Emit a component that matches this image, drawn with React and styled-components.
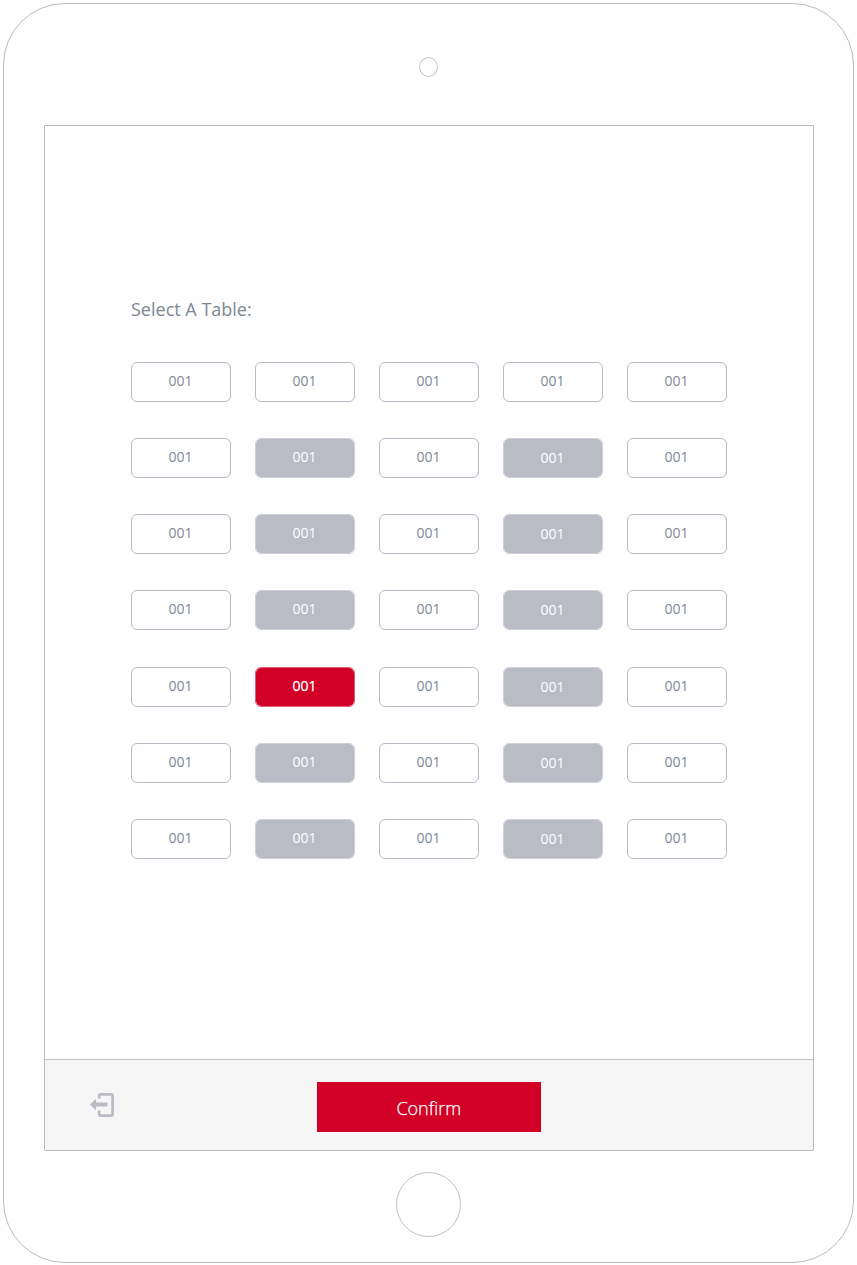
import React, { useState } from 'react';
import styled, { createGlobalStyle, css } from 'styled-components';

const GlobalStyle = createGlobalStyle`
  *, *::before, *::after { box-sizing: border-box; }
  body {
    margin: 0;
    background: #fefefe;
    font-family: "Open Sans", "Noto Sans", sans-serif;
  }
  button { font-family: inherit; }
`;

const Tablet = styled.div`
  width: 851px;
  height: 1260px;
  margin: 3px;
  padding-top: 53px;
  border: 1px solid #bcbcbc;
  border-radius: 62px;
  background: #fefefe;
  display: flex;
  flex-direction: column;
  align-items: center;
`;

const Camera = styled.div`
  flex: none;
  width: 19px;
  height: 20px;
  border: 1px solid #c8c8c8;
  border-radius: 50%;
`;

const Screen = styled.main`
  flex: none;
  width: 770px;
  height: 1026px;
  margin-top: 48px;
  border: 1px solid #bcbcbc;
  border-radius: 1px;
  display: flex;
  flex-direction: column;
`;

const HomeButton = styled.div`
  flex: none;
  width: 65px;
  height: 65px;
  margin-top: 21px;
  border: 1px solid #c2c2c2;
  border-radius: 50%;
`;

const Content = styled.section`
  flex: 1;
  padding: 171px 86px 0;
`;

const Title = styled.h1`
  margin: 0 0 40px;
  padding-left: 0.5px;
  font-size: 18px;
  line-height: 25px;
  font-weight: 400;
  color: #7d8894;
`;

const TableGrid = styled.div`
  display: grid;
  grid-template-columns: repeat(5, 100px);
  grid-auto-rows: 40px;
  column-gap: 24px;
  row-gap: 36.15px;
`;

const tones = {
  free: css`
    background: #fefefe;
    border-color: #b9bbc6;
    color: #7d8894;
  `,
  taken: css`
    background: #b9bbc5;
    border-color: #cfd0d8;
    background-clip: padding-box;
    color: #fefefe;
  `,
  selected: css`
    background: #d20026;
    border-color: #e0607a;
    background-clip: padding-box;
    color: #fff;
    -webkit-text-stroke: 0.25px #fff;
  `,
};

const TableButton = styled.button`
  padding: ${({ $lowered }) => ($lowered ? '0' : '0 0 2px')};
  border: 1px solid;
  border-radius: 6px;
  font-size: 14px;
  line-height: 20px;
  text-align: center;
  ${({ $tone }) => tones[$tone]}
`;

const Footer = styled.footer`
  height: 91px;
  padding: 22px 45px 0;
  border-top: 1px solid #c4c4c4;
  background: #f6f6f6;
  display: grid;
  grid-template-columns: 227px 224.5px 1fr;
  align-items: start;
`;

const ExitButton = styled.button`
  width: 24px;
  height: 25px;
  margin-top: 11px;
  padding: 0;
  border: 0;
  background: none;
  color: #b9bbc5;

  svg { display: block; }
`;

const ConfirmButton = styled.button`
  height: 50px;
  padding: 2px 0 0;
  border: 0;
  background: #d20026;
  color: #fff;
  font-size: 18px;
  font-weight: 300;
  line-height: 25px;
  -webkit-text-stroke: 0.25px #fff;
`;

const ExitIcon = () => (
  <svg width="24" height="25" viewBox="0 0 24 25" aria-hidden="true">
    <path
      d="M9.2 5.8V2.8Q9.2 1.4 10.6 1.4H21.2Q22.6 1.4 22.6 2.8V21.2Q22.6 22.6 21.2 22.6H10.6Q9.2 22.6 9.2 21.2V17.6"
      fill="none"
      stroke="currentColor"
      strokeWidth="2.7"
    />
    <path d="M0 11.6L6 5.8V9.5H17.5V13.6H6V17.4Z" fill="currentColor" />
  </svg>
);

const ROWS = 7;
const COLUMNS = 5;
const tables = Array.from({ length: ROWS * COLUMNS }, (_, id) => {
  const row = Math.floor(id / COLUMNS);
  const column = id % COLUMNS;
  return { id, label: '001', column, taken: row > 0 && column % 2 === 1 };
});

export default function App() {
  const [selected, setSelected] = useState(21);

  return (
    <>
      <GlobalStyle />
      <Tablet>
        <Camera />
        <Screen>
          <Content>
            <Title>Select A Table:</Title>
            <TableGrid>
              {tables.map(({ id, label, column, taken }) => (
                <TableButton
                  key={id}
                  $tone={id === selected ? 'selected' : taken ? 'taken' : 'free'}
                  $lowered={taken && column === 3}
                  onClick={() => !taken && setSelected(id)}
                >
                  {label}
                </TableButton>
              ))}
            </TableGrid>
          </Content>
          <Footer>
            <ExitButton aria-label="Exit">
              <ExitIcon />
            </ExitButton>
            <ConfirmButton>Confirm</ConfirmButton>
          </Footer>
        </Screen>
        <HomeButton />
      </Tablet>
    </>
  );
}
